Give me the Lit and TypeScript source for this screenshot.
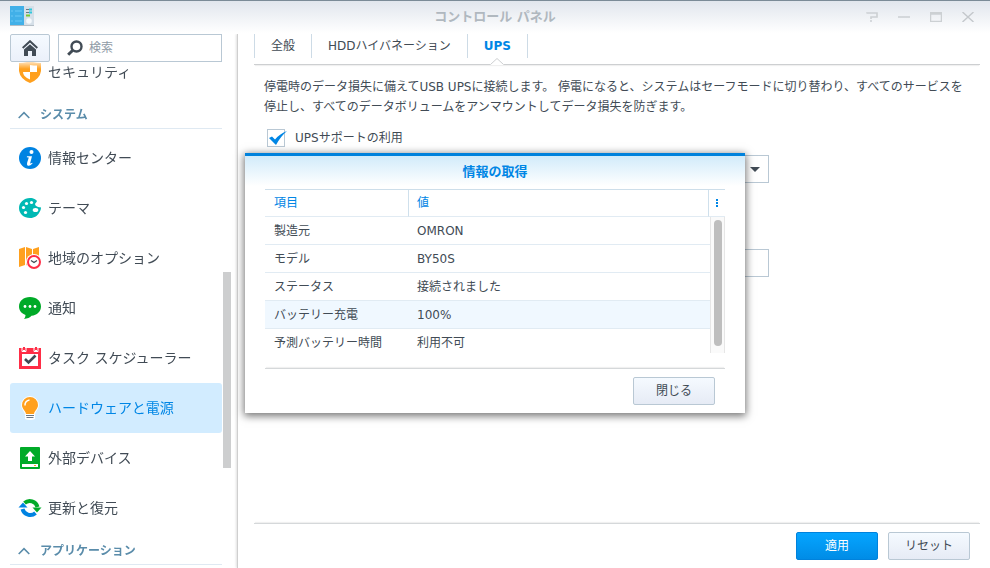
import { LitElement, html, css, svg } from "lit";
import { customElement, property, state } from "lit/decorators.js";
import { classMap } from "lit/directives/class-map.js";

const icons: Record<string, unknown> = {
  security: svg`<path d="M0 2 Q6 2 11 0 Q16 2 22 2 V10 Q21 18 11 22 Q1 18 0 10Z" fill="#ffa01e"/>
    <path d="M11 4 Q15 4.500 18 4.500 V11 H11Z" fill="#fff"/>
    <path d="M4 11 H11 V18.500 Q4 16 4 11Z" fill="#fff"/>`,
  info: svg`<circle cx="11" cy="11" r="11" fill="#0083e2"/><circle cx="12.500" cy="5" r="2" fill="#fff"/>
    <path d="M8 9.200 H13 L11.200 16 Q11 17.300 13.200 15.800 L13.500 16.500 Q10.500 19.500 8.500 18.400 Q7.600 17.700 8.200 15.600 L9.800 10.400 L7.800 10.200Z" fill="#fff"/>`,
  theme: svg`<path d="M11 1 C5 1 0 5.500 0 11 C0 17 5 21 11 21 C16 21 18.500 18.500 20 16 C21 14.500 22 12.500 22 10.500 C21 10 19.500 10.600 18 9.500 C15.500 8 15.500 6.500 17.500 5 C18.500 4 17.500 3 16 2.200 C14.500 1.300 13 1 11 1Z" fill="#00b9b4"/>
    <g fill="#fff"><circle cx="12.500" cy="5.500" r="1.600"/><circle cx="7.500" cy="6.500" r="1.600"/><circle cx="4.500" cy="10.500" r="1.600"/><circle cx="6.500" cy="15.500" r="1.600"/><ellipse cx="16.500" cy="13" rx="2.800" ry="2"/></g>`,
  region: svg`<path d="M0 2 L6 0 V18 L0 20Z" fill="#ffa01e"/><path d="M7 0 L13 2 V20 L7 18Z" fill="#ffa01e"/><path d="M14 2 L20 0 V18 L14 20Z" fill="#ffa01e"/>
    <circle cx="15" cy="15" r="8" fill="#fff"/><circle cx="15" cy="15" r="6" fill="#fff" stroke="#ff2d46" stroke-width="2"/>
    <path d="M12 13.500 L15 15.500 L18 13.500" fill="none" stroke="#414b55" stroke-width="1.300"/>`,
  notify: svg`<path d="M11 0 C4.500 0 0 4 0 9.500 C0 13.500 2.500 16.500 6.500 18 C6.500 19.500 6 21 4.800 22 C8.500 21.800 11 20.500 12.500 18.800 C18 18.300 22 14.500 22 9.500 C22 4 17.500 0 11 0Z" fill="#00aa28"/>
    <g fill="#fff"><circle cx="6" cy="9.500" r="1.400"/><circle cx="11" cy="9.500" r="1.400"/><circle cx="16" cy="9.500" r="1.400"/></g>`,
  task: svg`<path d="M0 1 H4 V4 H6 V1 H16 V4 H18 V1 H22 V22 H0Z" fill="#ff2d46"/><path d="M4 0 H6 V3 H4Z M16 0 H18 V3 H16Z" fill="#ff2d46"/>
    <path d="M3 1 V4.500 H7 V1 M15 1 V4.500 H19 V1" fill="none" stroke="#fff"/><rect x="3" y="7" width="16" height="12" fill="#fff"/>
    <path d="M6 12 L9.500 15.500 L16.500 8.500" fill="none" stroke="#414b55" stroke-width="2.600"/>`,
  power: svg`<path d="M11 -1 A9 9 0 0 0 2.200 8 C2.200 12 5 13.500 6 17.500 L6 22 Q11 24 16 22 V17.500 C17 13.500 19.800 12 19.800 8 A9 9 0 0 0 11 -1Z" fill="#fff"/>
    <path d="M11 0 A8 8 0 0 0 3 8 C3 12 6.500 13.500 7 17 H15 C15.500 13.500 19 12 19 8 A8 8 0 0 0 11 0Z" fill="#ffa01e"/>
    <path d="M6 8.500 A5 5 0 0 1 10.500 3" fill="none" stroke="#fff" stroke-width="1.500"/>
    <path d="M7 18.500 H15 M7.500 20.500 H14.500" stroke="#6b7886" stroke-width="1.200"/>`,
  device: svg`<rect x="1" width="20" height="22" rx="1" fill="#00aa28"/><path d="M11 4 L16 9.500 H13 V14 H9 V9.500 H6Z" fill="#fff"/>
    <rect x="3" y="17" width="16" height="3" fill="#fff"/><rect x="15" y="18" width="2" height="1" fill="#ffa01e"/>`,
  update: svg`<path d="M5.500 6 A8 8 0 0 1 18.500 10" fill="none" stroke="#00aa28" stroke-width="4"/><path d="M22.500 10.500 H13.500 L18 15.500Z" fill="#00aa28"/>
    <path d="M16.500 16 A8 8 0 0 1 3.500 12" fill="none" stroke="#0083e2" stroke-width="4"/><path d="M-.5 10.500 H8.500 L4 5.500Z" fill="#0083e2"/>`,
};

interface Item { icon: string; label: string }
interface Section { title: string; items: Item[] }

const systemSections: Section[] = [
  {
    title: "システム",
    items: [
      { icon: "info", label: "情報センター" },
      { icon: "theme", label: "テーマ" },
      { icon: "region", label: "地域のオプション" },
      { icon: "notify", label: "通知" },
      { icon: "task", label: "タスク スケジューラー" },
      { icon: "power", label: "ハードウェアと電源" },
      { icon: "device", label: "外部デバイス" },
      { icon: "update", label: "更新と復元" },
    ],
  },
  { title: "アプリケーション", items: [] },
];

const shared = css`
  * { box-sizing: border-box; }
  button, input, select { font: inherit; color: inherit; margin: 0; }
  button { padding: 0; border: 0; background: none; cursor: pointer; }
  svg { display: block; }
  .btn {
    width: 82px; height: 28px; border: 1px solid #b9c8d4; border-radius: 2px;
    background: linear-gradient(#f5faff, #e6ebf5); color: #414b55; line-height: 26px;
  }
  .btn.primary { background: linear-gradient(#05a5ff, #008ce6); border-color: #0082dc; color: #fff; }
`;

@customElement("side-nav")
class SideNav extends LitElement {
  @state() current = "power";

  static styles = [shared, css`
    :host { display: flex; flex-direction: column; min-height: 0; padding-left: 10px; }
    .tools { display: flex; gap: 8px; height: 28px; flex: none; margin-right: 15px; }
    .home {
      width: 40px; flex: none; border: 1px solid #b9c8d4; border-radius: 2px;
      background: linear-gradient(#f5faff, #ebf0fa); display: grid; place-items: center;
    }
    .search { flex: 1; display: flex; align-items: center; gap: 6px; min-width: 0; border: 1px solid #b9c8d4; padding-left: 8px; }
    .search input { flex: 1; min-width: 0; border: 0; padding: 0; outline: 0; background: none; }
    .search input::placeholder { color: #8f9ba6; opacity: 1; }
    .body { flex: 1; min-height: 0; display: flex; gap: 1px; }
    .list { flex: 1; overflow: hidden; padding-bottom: 50px; mask-image: linear-gradient(rgba(0, 0, 0, 0.3), #000 7px); }
    .track { width: 14px; display: grid; grid-template-rows: 210fr 196fr 100fr; }
    .thumb { grid-row: 2; width: 8px; background: #cdcecf; }
    .item {
      display: flex; align-items: center; gap: 7px; width: 100%; height: 50px; padding-left: 9px;
      border-radius: 3px; font-size: 14px; color: #414b55; text-decoration: none; white-space: nowrap;
    }
    .item.on { background: #d2ecff; color: #0086e5; }
    .item svg { overflow: visible; flex: none; }
    .head {
      display: flex; align-items: center; gap: 10px; width: 100%; height: 32px; margin-bottom: 4px; padding: 4px 0 0 8px;
      border-bottom: 1px solid #dfe9f2; color: #5a8caa; font-weight: bold;
    }
  `];

  firstUpdated() {
    const list = this.renderRoot.querySelector(".list");
    if (list) list.scrollTop = 15;
  }

  item(i: Item) {
    return html`<a href="#${i.icon}" class=${classMap({ item: true, on: i.icon === this.current })}
      @click=${(e: Event) => { e.preventDefault(); this.current = i.icon; }}>
      <svg width="22" height="22" viewBox="0 0 22 22" aria-hidden="true">${icons[i.icon]}</svg>${i.label}</a>`;
  }

  render() {
    return html`
      <div class="tools">
        <button class="home" aria-label="ホーム">
          <svg width="16" height="16" viewBox="0 0 16 16"><path d="M.7 8 L8 1.200 L15.300 8" fill="none" stroke="#414b55" stroke-width="2"/><path d="M2 9.500 L8 4.200 L14 9.500 V16 H10 V11 H6 V16 H2Z" fill="#414b55"/><path d="M1.500 9.300 L8 3.200 L14.500 9.300" fill="none" stroke="#e4eaf2" stroke-width=".8"/></svg>
        </button>
        <label class="search">
          <svg width="16" height="16" viewBox="0 0 16 16" aria-hidden="true"><circle cx="9.500" cy="6.500" r="5" fill="none" stroke="#414b55" stroke-width="2.400"/><path d="M1.200 14.800 L5.500 10.500" stroke="#414b55" stroke-width="3"/></svg>
          <input type="text" placeholder="検索" aria-label="検索">
        </label>
      </div>
      <div class="body">
        <nav class="list">
          ${this.item({ icon: "security", label: "セキュリティ" })}
          ${systemSections.map((s) => html`
            <button class="head">
              <svg width="12" height="8" viewBox="0 0 12 8" aria-hidden="true"><path d="M.7 7 L6 1.700 L11.300 7" fill="none" stroke="#5a8caa" stroke-width="1.600"/></svg>${s.title}
            </button>
            ${s.items.map((i) => this.item(i))}`)}
        </nav>
        <div class="track"><div class="thumb"></div></div>
      </div>`;
  }
}

@customElement("info-dialog")
class InfoDialog extends LitElement {
  @property({ attribute: false }) rows: string[][] = [];

  static styles = [shared, css`
    :host {
      display: block; width: 500px; max-width: 100%; padding: 0 20px 8px; border-top: 3px solid #0082dc;
      background: linear-gradient(#d2ebfa, #fff 30px); box-shadow: 0 2px 8px 1px rgba(0, 0, 0, 0.55);
    }
    h2 { margin: 0; height: 33px; line-height: 32px; font-size: 13px; text-align: center; color: #0086e5; }
    .grid { position: relative; height: 164px; overflow: hidden; border-top: 1px solid #cddeea; }
    table { width: 100%; border-collapse: separate; border-spacing: 0; table-layout: fixed; }
    tr > * { height: 28px; padding: 0 0 0 9px; text-align: left; font-weight: normal; line-height: 20px; border-bottom: 1px solid #e1ebf3; }
    thead tr > * { height: 27px; color: #0086e5; }
    th + th { border-left: 1px solid #cfe0ec; padding-left: 8px; }
    .c1 { width: 143px; }
    .c3 { width: 17px; }
    th.menu { padding-left: 7px; }
    tbody tr.hover { background: #f0f8ff; }
    .menu button { display: block; }
    .bar {
      position: absolute; top: 27px; right: 0; bottom: 0; width: 15px; padding: 3px 3px 7px;
      border: solid #e6e6e6; border-width: 0 1px; background: #fafafa;
    }
    .thumb { height: 100%; width: 8px; border-radius: 4px; background: #bebebe; }
    .foot { display: flex; justify-content: flex-end; margin-top: 15px; padding: 8px 10px 0 0; border-top: 1px solid #d5d8da; box-shadow: 0 -2px 1px -1px #f0f0f0; }
  `];

  render() {
    return html`
      <h2>情報の取得</h2>
      <div class="grid">
        <table>
          <colgroup><col class="c1"><col><col class="c3"></colgroup>
          <thead><tr><th scope="col">項目</th><th scope="col">値</th>
            <th class="menu"><button aria-label="列">
              <svg width="2" height="8" viewBox="0 0 2 8"><path d="M0 0h2v2H0z M0 3h2v2H0z M0 6h2v2H0z" fill="#0086e5"/></svg></button></th></tr></thead>
          <tbody>${this.rows.map((r) => html`<tr class=${classMap({ hover: r[2] === "hover" })}><td>${r[0]}</td><td colspan="2">${r[1]}</td></tr>`)}</tbody>
        </table>
        <div class="bar"><div class="thumb"></div></div>
      </div>
      <div class="foot"><button class="btn">閉じる</button></div>`;
  }
}

@customElement("app-root")
class AppRoot extends LitElement {
  @state() tab = "UPS";

  static styles = [shared, css`
    :host {
      display: flex; flex-direction: column; height: 100vh; position: relative; overflow: hidden; background: #fff;
      color: #414b55; font: 12px/20px "DejaVu Sans", "Noto Sans CJK JP", sans-serif;
    }
    .title {
      flex: none; display: grid; grid-template-columns: 1fr auto 1fr; align-items: center; height: 34px; padding: 0 6px 2px;
      border-top: 1px solid #7b8b97; background: linear-gradient(#e1e6ed, #fff 32px);
    }
    .logo { margin-left: 4px; }
    h1 { margin: 0; font-size: 13px; color: #b0b8bf; }
    .wins { display: flex; justify-content: flex-end; }
    .wins button { width: 32px; height: 24px; display: grid; place-items: center; }
    .cols { flex: 1; min-height: 0; display: flex; overflow: hidden; }
    side-nav { width: 237px; flex: none; }
    main { flex: 1; min-width: 0; display: flex; flex-direction: column; padding: 0 10px 8px 16px; border-left: 1px solid #cfcfcf; box-shadow: -1px 0 2px rgba(0, 0, 0, 0.12); }
    .tabs { display: flex; height: 31px; border-bottom: 1px solid #cdcfd1; flex: none; box-shadow: 0 2px 1px -1px #f0f0f0; }
    .tab { position: relative; height: 24px; padding: 0 16px; border-left: 1px solid #cddbe6; }
    .tab:last-child { border-right: 1px solid #cddbe6; }
    .tab.on { color: #0086e5; font-weight: bold; }
    .notch { position: absolute; left: 0; right: 0; top: 24px; margin: auto; }
    .content { flex: 1; padding: 12px 10px 0; }
    p { margin: 0; }
    .check { display: flex; align-items: center; gap: 10px; margin: 11px 0 0 3px; height: 20px; }
    .box { display: grid; width: 18px; height: 18px; }
    .box > * { grid-area: 1 / 1; }
    .box input { appearance: none; width: 18px; height: 18px; border: 1px solid #b9c8d4; background: #fff; }
    .box svg { pointer-events: none; visibility: hidden; overflow: visible; }
    .box input:checked + svg { visibility: visible; }
    .fields { display: grid; justify-items: start; gap: 66px; margin: 7px 0 0 281px; }
    .pick { display: grid; width: 224px; align-items: center; }
    .pick > * { grid-area: 1 / 1; }
    .pick svg { justify-self: end; margin-right: 9px; pointer-events: none; }
    .field { appearance: none; width: 224px; height: 28px; padding: 0 8px; border: 1px solid #b9c8d4; border-radius: 0; background: #fff; }
    .actions { display: flex; justify-content: flex-end; gap: 10px; padding: 8px 10px 0 0; border-top: 1px solid #d5d8da; box-shadow: 0 -2px 1px -1px #f0f0f0; }
    .layer { position: absolute; inset: 0; display: grid; place-items: center; padding-bottom: 2px; }
  `];

  render() {
    const rows = [
      ["製造元", "OMRON"],
      ["モデル", "BY50S"],
      ["ステータス", "接続されました"],
      ["バッテリー充電", "100%", "hover"],
      ["予測バッテリー時間", "利用不可"],
    ];
    return html`
      <header class="title">
        <svg class="logo" width="24" height="21" viewBox="0 0 24 21" aria-hidden="true">
          <rect x="13" width="11" height="19" fill="#d5dfe8"/><rect y="19" width="24" height="1" fill="#b4bec6"/><rect width="14" height="19" fill="#41b0e8"/>
          <path d="M1 5h2M5 5h7M1 10h2M5 10h7M1 15h2M5 15h7" stroke="#6cc8f5"/>
          <path d="M16 3.500h3M16 6.500h3M16 9.500h3" stroke="#6b7886"/><path d="M19 3.500h3M19 6.500h3" stroke="#32c8dc" stroke-width="2"/><path d="M16 9.500h4" stroke="#7ac832" stroke-width="2"/><circle cx="19" cy="15" r="2.800" fill="#f5f9fc"/>
        </svg>
        <h1>コントロール パネル</h1>
        <div class="wins">
          <button aria-label="ヘルプ"><svg width="12" height="10" viewBox="0 0 12 10"><path d="M1 1.500V1h10v4H5v2M4 9h2" fill="none" stroke="#ccd0d3" stroke-width="1.600"/></svg></button>
          <button aria-label="最小化"><svg width="12" height="10" viewBox="0 0 12 10"><path d="M0 5h12" stroke="#c8ccd0" stroke-width="1.400"/></svg></button>
          <button aria-label="最大化"><svg width="12" height="10" viewBox="0 0 12 10"><path d="M.5 .5h11v9H.5z M.5 2h11" fill="none" stroke="#ccd0d3" stroke-width="1.500"/></svg></button>
          <button aria-label="閉じる"><svg width="12" height="10" viewBox="0 0 12 10"><path d="M.5 0 L11.500 10 M11.500 0 L.5 10" stroke="#c4c8cc" stroke-width="1.400"/></svg></button>
        </div>
      </header>
      <div class="cols">
        <side-nav></side-nav>
        <main>
          <div class="tabs" role="tablist">
            ${["全般", "HDDハイバネーション", "UPS"].map((t) => html`<button role="tab" aria-selected=${t === this.tab}
              class=${classMap({ tab: true, on: t === this.tab })} @click=${() => { this.tab = t; }}>${t}${t === this.tab
                ? html`<svg class="notch" width="14" height="7" viewBox="0 0 14 7"><path d="M0 7 L7 0 L14 7Z" fill="#fff"/><path d="M.5 6.500 L7 .5 L13.500 6.500" fill="none" stroke="#cdcfd1"/></svg>` : ""}</button>`)}
          </div>
          <div class="content">
            <p>停電時のデータ損失に備えてUSB UPSに接続します。 停電になると、システムはセーフモードに切り替わり、すべてのサービスを停止し、すべてのデータボリュームをアンマウントしてデータ損失を防ぎます。</p>
            <label class="check"><span class="box"><input type="checkbox" checked>
              <svg width="18" height="18" viewBox="0 0 18 18"><path d="M2 9 L5 7.500 L8 10.500 Q13 4.500 20 2 Q13.500 7.500 9 16Z" fill="#0086e5"/></svg></span>UPSサポートの利用</label>
            <div class="fields">
              <div class="pick"><select class="field" aria-label="種類"><option></option></select>
                <svg width="10" height="5" viewBox="0 0 10 5" aria-hidden="true"><path d="M0 0h10L5 5Z" fill="#414b55"/></svg></div>
              <input class="field" type="text" aria-label="値">
            </div>
          </div>
          <div class="actions"><button class="btn primary">適用</button><button class="btn">リセット</button></div>
        </main>
      </div>
      <div class="layer"><info-dialog role="dialog" .rows=${rows}></info-dialog></div>`;
  }
}
